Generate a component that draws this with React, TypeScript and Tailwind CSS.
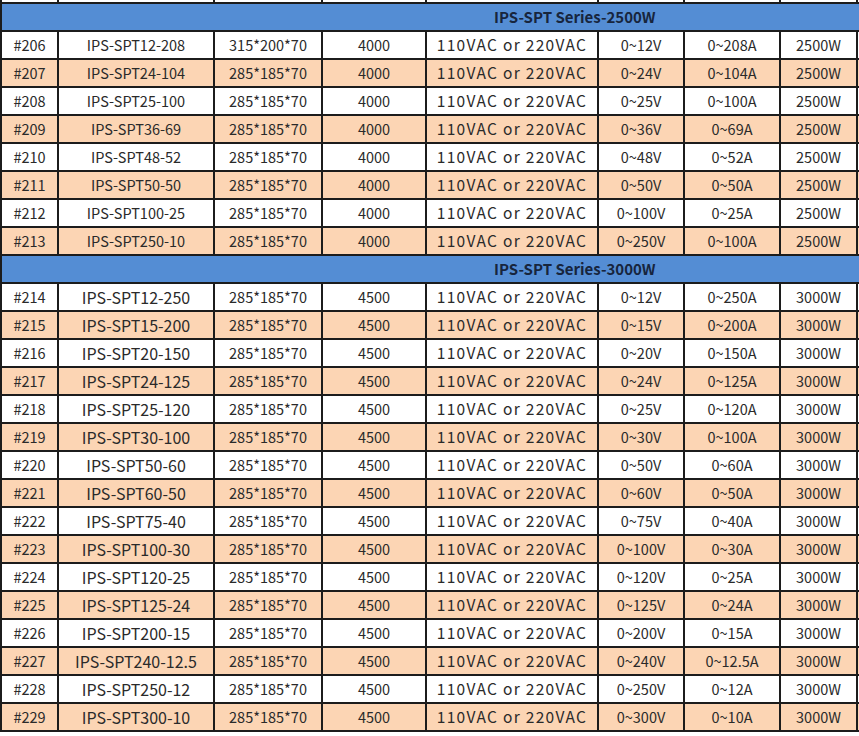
import React from "react";

type Row = { id: string; model: string; size: string; n: string; v: string; a: string; w: string; big?: boolean };

const s1: Row[] = [
  ["206", "IPS-SPT12-208", "315*200*70", "0~12V", "0~208A"],
  ["207", "IPS-SPT24-104", "285*185*70", "0~24V", "0~104A"],
  ["208", "IPS-SPT25-100", "285*185*70", "0~25V", "0~100A"],
  ["209", "IPS-SPT36-69", "285*185*70", "0~36V", "0~69A"],
  ["210", "IPS-SPT48-52", "285*185*70", "0~48V", "0~52A"],
  ["211", "IPS-SPT50-50", "285*185*70", "0~50V", "0~50A"],
  ["212", "IPS-SPT100-25", "285*185*70", "0~100V", "0~25A"],
  ["213", "IPS-SPT250-10", "285*185*70", "0~250V", "0~100A"],
].map(([id, model, size, v, a]) => ({ id, model, size, n: "4000", v, a, w: "2500W" }));

const s2: Row[] = [
  ["214", "IPS-SPT12-250", "0~12V", "0~250A"],
  ["215", "IPS-SPT15-200", "0~15V", "0~200A"],
  ["216", "IPS-SPT20-150", "0~20V", "0~150A"],
  ["217", "IPS-SPT24-125", "0~24V", "0~125A"],
  ["218", "IPS-SPT25-120", "0~25V", "0~120A"],
  ["219", "IPS-SPT30-100", "0~30V", "0~100A"],
  ["220", "IPS-SPT50-60", "0~50V", "0~60A"],
  ["221", "IPS-SPT60-50", "0~60V", "0~50A"],
  ["222", "IPS-SPT75-40", "0~75V", "0~40A"],
  ["223", "IPS-SPT100-30", "0~100V", "0~30A"],
  ["224", "IPS-SPT120-25", "0~120V", "0~25A"],
  ["225", "IPS-SPT125-24", "0~125V", "0~24A"],
  ["226", "IPS-SPT200-15", "0~200V", "0~15A"],
  ["227", "IPS-SPT240-12.5", "0~240V", "0~12.5A"],
  ["228", "IPS-SPT250-12", "0~250V", "0~12A"],
  ["229", "IPS-SPT300-10", "0~300V", "0~10A"],
].map(([id, model, v, a]) => ({ id, model, size: "285*185*70", n: "4500", v, a, w: "3000W", big: true }));

const cell = "flex items-center justify-center border-r-2 border-[#1c1c1c] shrink-0 h-full";

function DataRow({ r, shade }: { r: Row; shade: boolean }) {
  return (
    <div className={`flex h-[28px] border-b-2 border-[#1c1c1c] ${shade ? "bg-[#fcd5b4]" : "bg-white"}`}>
      <div className={`${cell} w-[57px]`}>#{r.id}</div>
      <div className={`${cell} w-[156px] ${r.big ? "text-[16px]" : "text-[14.5px]"}`}>{r.model}</div>
      <div className={`${cell} w-[108px]`}>{r.size}</div>
      <div className={`${cell} w-[104px]`}>{r.n}</div>
      <div className={`${cell} w-[172px] text-[15.5px] tracking-[1.3px]`}>110VAC or 220VAC</div>
      <div className={`${cell} w-[86px]`}>{r.v}</div>
      <div className={`${cell} w-[96px]`}>{r.a}</div>
      <div className={`${cell} w-[77px]`}>{r.w}</div>
      <div className="flex-1" />
    </div>
  );
}

function Header({ title }: { title: string }) {
  return (
    <div className="flex h-[28px] items-center border-b-2 border-[#1c1c1c] bg-[#548dd4] pl-[492px] text-[15px] font-bold text-[#17253d]">
      {title}
    </div>
  );
}

export default function App() {
  return (
    <div
      className="w-[859px] h-[736px] overflow-hidden bg-white text-[14.5px] text-[#2a2a2a]"
      style={{ fontFamily: '"Noto Sans CJK SC", "Noto Sans", sans-serif' }}
    >
      <div className="border-l-2 border-[#1c1c1c]">
        <div className="flex h-[4px] border-b-2 border-[#1c1c1c] bg-white">
          <div className={`${cell} w-[57px]`} />
          <div className={`${cell} w-[156px]`} />
          <div className={`${cell} w-[108px]`} />
          <div className={`${cell} w-[104px]`} />
          <div className={`${cell} w-[172px]`} />
          <div className={`${cell} w-[86px]`} />
          <div className={`${cell} w-[96px]`} />
          <div className={`${cell} w-[77px]`} />
        </div>
        <Header title="IPS-SPT Series-2500W" />
        {s1.map((r, i) => (
          <DataRow key={r.id} r={r} shade={i % 2 === 1} />
        ))}
        <Header title="IPS-SPT Series-3000W" />
        {s2.map((r, i) => (
          <DataRow key={r.id} r={r} shade={i % 2 === 1} />
        ))}
      </div>
    </div>
  );
}
